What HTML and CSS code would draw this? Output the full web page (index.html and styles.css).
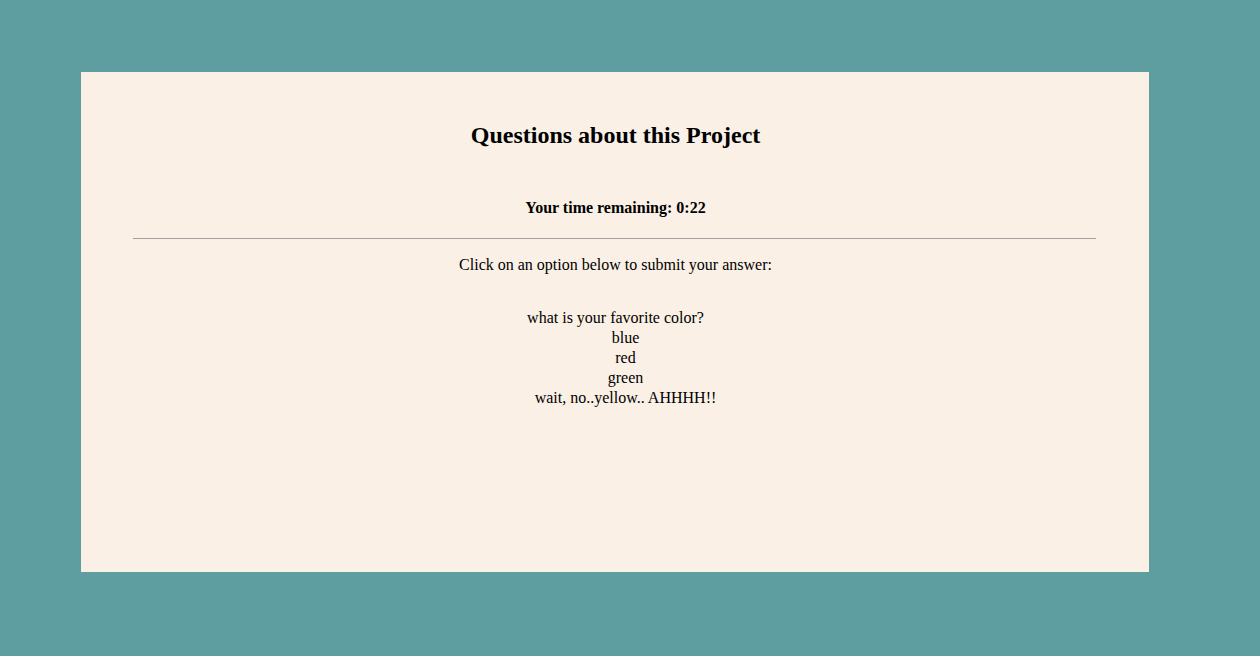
FILE: index.html
```html
<!DOCTYPE html>
<html lang="en">
<head>
<meta charset="utf-8">
<title>Questions about this Project</title>
<link rel="stylesheet" href="styles.css">
</head>
<body>
<main class="card">
  <h2 class="title">Questions about this Project</h2>
  <h4 class="timer">Your time remaining: 0:22</h4>
  <hr class="divider">
  <p class="instructions">Click on an option below to submit your answer:</p>
  <section class="question">
    <div class="prompt">what is your favorite color?</div>
    <div class="options">
      <div class="option">blue</div>
      <div class="option">red</div>
      <div class="option">green</div>
      <div class="option">wait, no..yellow.. AHHHH!!</div>
    </div>
  </section>
</main>
</body>
</html>
```

FILE: styles.css
```css
html, body {
  margin: 0;
  padding: 0;
}
body {
  background: #5f9ea0;
  font-family: "Liberation Serif", "Times New Roman", serif;
  color: #000;
  padding: 72px 0 0 81px;
  height: 656px;
  box-sizing: border-box;
  overflow: hidden;
}
.card {
  background: #faf0e6;
  width: 1068px;
  height: 500px;
  box-sizing: border-box;
  padding: 50px 52px 0 53px;
  text-align: center;
}
.title {
  margin: 0;
  font-size: 24px;
  font-weight: bold;
}
.timer {
  margin: 50px 0 0;
  font-size: 16px;
  font-weight: bold;
}
.divider {
  margin: 21px 1px 0 -1px;
  border: 0;
  border-top: 1px solid #a0a0a0;
  height: 0;
}
.instructions {
  margin: 16px 0 0;
  font-size: 16px;
  line-height: 20px;
}
.question {
  margin-top: 33px;
  font-size: 16px;
  line-height: 20px;
}
.options {
  padding-left: 20px;
}
```
